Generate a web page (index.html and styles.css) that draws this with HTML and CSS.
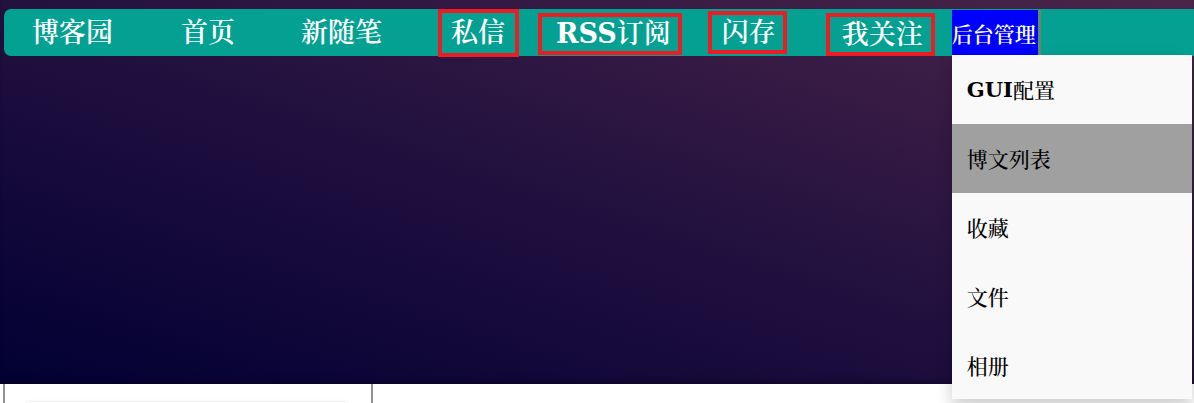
FILE: index.html
```html
<!DOCTYPE html>
<html lang="zh-CN">
<head>
<meta charset="utf-8">
<title>博客园</title>
<link rel="stylesheet" href="styles.css">
</head>
<body>
<header class="hero">
  <nav class="navbar">
    <a class="nav-item first" href="#">博客园</a>
    <a class="nav-item gap-home" href="#">首页</a>
    <a class="nav-item gap-new" href="#">新随笔</a>
    <a class="nav-item boxed box-msg" href="#">私信</a>
    <a class="nav-item boxed box-rss" href="#"><span class="latin">RSS</span>订阅</a>
    <a class="nav-item boxed box-flash" href="#">闪存</a>
    <a class="nav-item boxed box-follow" href="#">我关注</a>
    <div class="admin">
      <a class="admin-btn" href="#">后台管理</a>
      <div class="dropdown">
        <a class="dd-item" href="#"><span class="latin">GUI</span>配置</a>
        <a class="dd-item active" href="#">博文列表</a>
        <a class="dd-item" href="#">收藏</a>
        <a class="dd-item" href="#">文件</a>
        <a class="dd-item" href="#">相册</a>
      </div>
    </div>
  </nav>
</header>
<main class="content">
  <aside class="sidebar">
    <div class="card"></div>
  </aside>
  <section class="main-col"></section>
</main>
</body>
</html>
```
FILE: styles.css
```css
html, body {
  margin: 0;
  padding: 0;
  background: #ffffff;
  overflow: hidden;
}
body {
  width: 1194px;
  height: 403px;
  font-family: "DejaVu Serif", "Noto Serif CJK SC", "Noto Sans CJK SC", serif;
}
a { text-decoration: none; }
.latin { font-weight: bold; }

.hero {
  height: 384px;
  padding-top: 9px;
  box-sizing: border-box;
  background: linear-gradient(to top right, #020033 0%, #1f0f3e 45%, #4b2549 100%);
  box-shadow: inset 0 -6px 6px -4px rgba(10, 0, 20, 0.45);
}

.navbar {
  position: relative;
  margin-left: 4px;
  height: 47px;
  background: #04a192;
  border-radius: 7px 0 0 7px;
  display: flex;
  align-items: center;
}

.nav-item {
  color: #ffffff;
  font-size: 27px;
  font-weight: 600;
  line-height: 30px;
  white-space: nowrap;
}
.first { margin-left: 28px; }
.gap-home { margin-left: 68px; }
.gap-new { margin-left: 66px; }

.boxed {
  border: 4px solid #ec1c24;
  box-sizing: border-box;
  display: flex;
  align-items: center;
  align-self: flex-start;
}
.box-msg { margin-left: 56px; height: 48px; padding: 0 10px 0 9px; }
.box-rss { margin-left: 19px; margin-top: 4px; height: 42px; padding: 0 7px 0 14px; }
.box-flash { margin-left: 26px; margin-top: 2px; height: 43px; padding: 0 7px 0 10px; }
.box-follow { margin-left: 39px; margin-top: 4px; height: 43px; padding: 0 8px 0 12px; }

.admin {
  position: relative;
  margin-left: 17px;
  align-self: flex-start;
  margin-top: 1px;
}
.admin-btn {
  display: flex;
  align-items: center;
  height: 45px;
  width: 86px;
  background: #0000ff;
  border-right: 3px solid #618a6d;
  color: #ffffff;
  font-size: 21px;
  font-weight: 600;
  white-space: nowrap;
}

.dropdown {
  position: absolute;
  left: 0;
  top: 45px;
  width: 240px;
  background: #f9f9f9;
  box-shadow: 0 8px 16px 0 rgba(0, 0, 0, 0.2);
  z-index: 5;
}
.dd-item {
  display: flex;
  align-items: center;
  height: 68.8px;
  padding: 0 15px;
  color: #000000;
  font-size: 21px;
  font-weight: 500;
}
.dd-item.active { background: #a0a0a0; }

.content {
  display: flex;
  height: 19px;
}
.sidebar {
  margin-left: 3px;
  width: 320px;
  border-left: 2px solid #909090;
  border-right: 2px solid #909090;
  padding: 18px 24px 0 22px;
}
.card {
  height: 10px;
  box-shadow: 0 -1px 3px rgba(0, 0, 0, 0.08);
}
.main-col { flex: 1; }
```
